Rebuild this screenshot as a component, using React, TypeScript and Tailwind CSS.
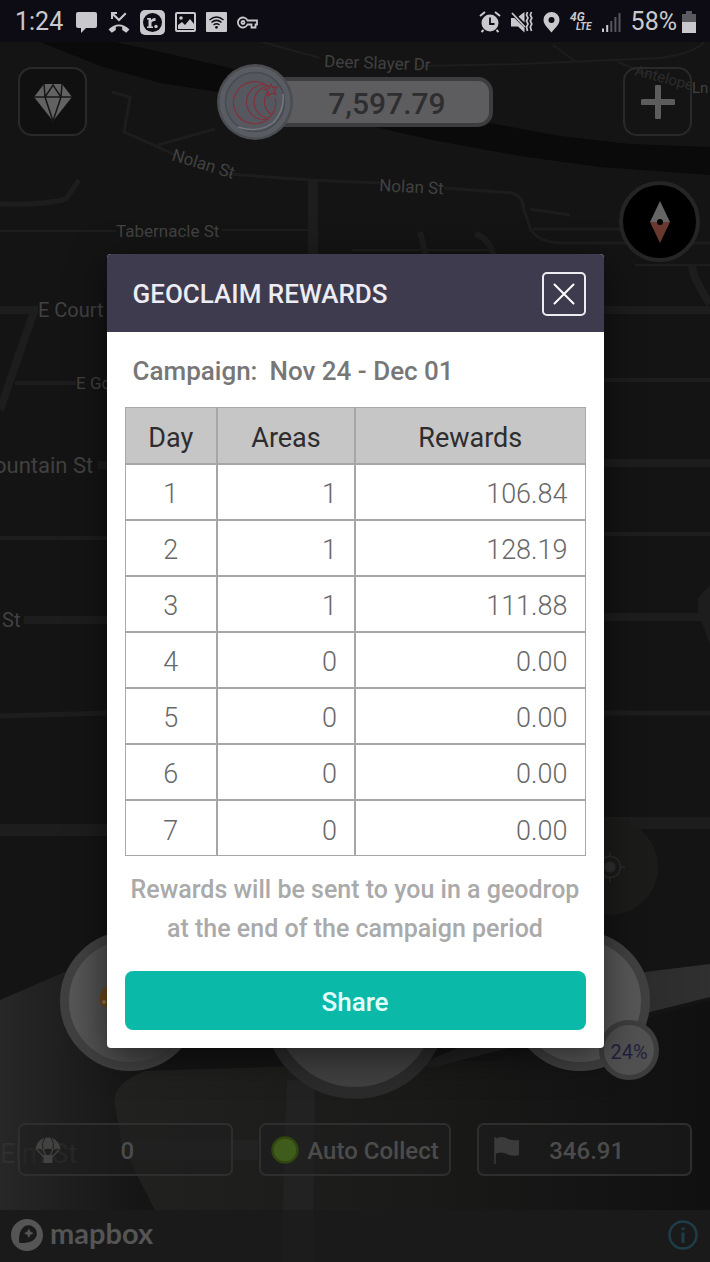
import type { ReactNode } from "react";
import { SiMapbox } from "react-icons/si";

const days = [
  { day: 1, areas: 1, rewards: "106.84" },
  { day: 2, areas: 1, rewards: "128.19" },
  { day: 3, areas: 1, rewards: "111.88" },
  { day: 4, areas: 0, rewards: "0.00" },
  { day: 5, areas: 0, rewards: "0.00" },
  { day: 6, areas: 0, rewards: "0.00" },
  { day: 7, areas: 0, rewards: "0.00" },
];

function StatusBar() {
  return (
    <header className="relative flex h-[42px] items-center justify-between bg-[#0d0c14] pt-[2px] pr-[14px] pl-[15px] text-[25px] text-[#c9c9cd]">
      <div className="flex items-center gap-[10px]">
        <span className="pr-[2px]">1:24</span>
        <svg width="23" height="23" viewBox="0 0 23 23" fill="currentColor">
          <path d="M3 1h17q2 0 2 2v12q0 2-2 2h-9l-5 5v-5H3q-2 0-2-2V3q0-2 2-2z" />
        </svg>
        <svg width="22" height="23" viewBox="0 0 22 23" fill="currentColor">
          <path d="M3 1h6v2H6.400l4.600 4.600 6-6 1.500 1.500-7.500 7.500L5 4.800V8H3z" />
          <path d="M0.500 18.500Q11 8.500 21.500 18.500l-3.300 3.300-4-2.700v-3.300q-3.200-1-6.400 0v3.300l-4 2.700z" />
        </svg>
        <svg width="25" height="25" viewBox="0 0 25 25">
          <rect width="25" height="25" rx="5" fill="currentColor" />
          <circle cx="12.500" cy="12.500" r="9.500" fill="#0d0c14" />
          <path d="M7 8h4v2q2-2.500 4.500-2v3q-3-.5-4 1.500v4h1.500v1.500H7V16.500h1.500V9.500H7z" fill="currentColor" />
          <circle cx="16" cy="16.500" r="1.700" fill="currentColor" />
        </svg>
        <svg width="21" height="20" viewBox="0 0 21 20" fill="none">
          <rect x="1" y="1" width="19" height="18" rx="1" stroke="currentColor" strokeWidth="2" />
          <circle cx="6" cy="6" r="1.800" fill="currentColor" />
          <path d="M3 17v-4l4-3 3 3 5-6 4 5v5z" fill="currentColor" />
        </svg>
        <svg width="21" height="20" viewBox="0 0 21 20" fill="none">
          <rect width="21" height="20" rx="1" fill="currentColor" />
          <g stroke="#0d0c14" strokeWidth="1.500">
            <path d="M3.500 8q7-6 14 0M5.500 10.500q5-4.300 10 0M7.500 13q3-2.500 6 0" />
          </g>
          <circle cx="10.500" cy="15.300" r="1.400" fill="#0d0c14" />
        </svg>
        <svg width="21" height="13" viewBox="0 0 21 13" fill="none" stroke="currentColor" strokeWidth="1.800">
          <path d="M10.500 4.500H20v4h-1.500V11.500h-4V8.500h-4a5 5 0 1 1 0-4z" />
          <circle cx="6" cy="6.500" r="1.500" />
        </svg>
      </div>
      <div className="flex items-center gap-[10px]">
        <svg width="22" height="22" viewBox="0 0 22 22" fill="none">
          <circle cx="11" cy="12" r="8.500" fill="currentColor" />
          <path d="M1 5l5-4M21 5l-5-4M4.500 19l-2 2M17.500 19l2 2" stroke="currentColor" strokeWidth="2" />
          <path d="M11 6.500V13h4.500" stroke="#0d0c14" strokeWidth="1.800" />
        </svg>
        <svg width="22" height="22" viewBox="0 0 22 22" fill="none">
          <path d="M0 7h3.500l10 10v4.500L7 15.500H0zM7.500 5.500L13.500 1v10.500z" fill="currentColor" />
          <path d="M1 2l13 14" stroke="currentColor" strokeWidth="1.800" />
          <path d="M16.500 1l-1 3 1.500 3-1.500 3 1.500 3-1.500 3 1 4M20.500 1l-1.200 3 1.500 3-1.500 3 1.500 3-1.500 3 1.200 4" stroke="currentColor" strokeWidth="1.700" />
        </svg>
        <svg width="17" height="22" viewBox="0 0 17 22" fill="currentColor">
          <path fillRule="evenodd" d="M8.500 1a8 8 0 0 1 8 8c0 5-5.500 9-8 12.500C6 18 .5 14 .5 9a8 8 0 0 1 8-8zm0 5a3 3 0 1 0 0 6 3 3 0 0 0 0-6z" />
        </svg>
        <span className="flex flex-col text-[12px] leading-[10px] font-bold italic">
          <span>4G</span>
          <span className="pl-[6px] text-[10px]">LTE</span>
        </span>
        <svg width="19" height="21" viewBox="0 0 19 21" fill="currentColor">
          <path d="M0 16.500h2V20H0zM4.200 13h2v7h-2z" />
          <path d="M8.300 9h2v11h-2zM12.400 5h2v15h-2zM16.500 1h2v19h-2z" fill="#55555b" />
        </svg>
        <span className="flex items-center gap-[5px]">
          58%
          <svg width="14" height="22" viewBox="0 0 14 22">
            <path d="M0 3h4V0h6v3h4v9H0z" fill="#5a5a60" />
            <path d="M0 11h14v11H0z" fill="currentColor" />
          </svg>
        </span>
      </div>
    </header>
  );
}

function MapCanvas() {
  return (
    <svg
      className="absolute inset-0 h-full w-full"
      viewBox="0 0 710 1262"
      preserveAspectRatio="xMidYMid slice"
      aria-label="Map"
    >
      <defs>
        <linearGradient id="west" x1="0" x2="140" gradientUnits="userSpaceOnUse">
          <stop stopColor="#272727" />
          <stop offset="1" stopColor="#151515" />
        </linearGradient>
        <linearGradient id="park" x1="110" x2="710" gradientUnits="userSpaceOnUse">
          <stop stopColor="#212120" />
          <stop offset="0.500" stopColor="#1a1a19" />
          <stop offset="1" stopColor="#101010" />
        </linearGradient>
        <linearGradient id="lane" x1="420" x2="710" gradientUnits="userSpaceOnUse">
          <stop stopColor="#1e1e1e" />
          <stop offset="1" stopColor="#303030" />
        </linearGradient>
      </defs>
      <rect width="710" height="1262" fill="#141414" />
      <path d="M40 42L100 66L160 83L225 93L380 128L432 140L520 156L600 167L710 175V147L630 144L560 136L495 124L300 90L230 68L170 54L115 42z" fill="#0a0a0a" />
      <g fill="none" stroke="#1d1d1d" strokeWidth="3">
        <path d="M262 42L320 58M418 66L520 64L660 58Q695 53 704 42M553 45L577 63M618 62L650 75" strokeWidth="2" />
        <path d="M112 92L130 97L124 132L160 148M158 145L215 129" strokeWidth="3" />
        <path d="M134 136L175 155M228 174L310 180L380 183M444 188L512 193Q523 196 524 210L531 230Q540 243 562 243H710M530 209L570 215M533 229H620" strokeWidth="3" />
        <path d="M0 204Q45 205 66 199L79 180" strokeWidth="5" />
        <path d="M0 231H116M222 230H308M352 250H490M635 265H710" strokeWidth="2" />
        <path d="M313 180V260" strokeWidth="10" />
        <path d="M420 232L426 256M475 234Q489 238 494 256" strokeWidth="6" />
        <path d="M0 310H38M600 310H710M34 312L24 340L0 410M692 264Q691 275 710 304" strokeWidth="8" />
        <path d="M15 383H76M600 380H710M0 538H110M600 534H710" strokeWidth="4" />
        <path d="M98 465H110M600 463H710M24 620H110M600 617H704" strokeWidth="8" />
        <path d="M0 716L110 713M600 713H710" strokeWidth="5" />
        <path d="M0 830H110M600 823H710" strokeWidth="12" />
      </g>
      <path d="M710 585L698 598V612L710 645z" fill="#1d1d1d" />
      <path d="M0 1000L65 972L160 945V1210H0z" fill="url(#west)" />
      <path d="M145 1071Q110 1085 115 1105L120 1135L137 1175L155 1210H710V1000L500 1060z" fill="url(#park)" />
      <path d="M420 1064L500 1030L645 972L710 964V997L650 1012L430 1068z" fill="url(#lane)" />
      <path d="M287 1080H315L313 1262H281z" fill="#222" />
      <path d="M120 1140H258V1160H128z" fill="#222" />
      <g fill="#414141" fontFamily="Roboto, sans-serif" fontSize="17">
        <text x="324" y="67" transform="rotate(2 324 67)">Deer Slayer Dr</text>
        <text x="634" y="75" fontSize="15" fill="#2c2c2c" transform="rotate(15 634 75)">Antelope</text>
        <text x="692" y="93" fontSize="15">Ln</text>
        <text x="171" y="160" transform="rotate(17 171 160)">Nolan St</text>
        <text x="379" y="191" transform="rotate(3 379 191)">Nolan St</text>
        <text x="116" y="237">Tabernacle St</text>
        <text x="38" y="317" fontSize="20">E Court</text>
        <text x="76" y="389">E Go</text>
        <text x="-6" y="473" fontSize="22">ountain St</text>
        <text x="2" y="627" fontSize="20">St</text>
        <text x="0" y="1163" fontSize="27" fill="#2f2f2f">Elm St</text>
      </g>
    </svg>
  );
}

function Coin() {
  return (
    <svg className="relative z-10" width="76" height="76" viewBox="0 0 76 76" fill="none">
      <clipPath id="moon">
        <circle cx="37" cy="38" r="21.500" />
      </clipPath>
      <circle cx="38" cy="38" r="38" fill="#4b4d52" />
      <circle cx="38" cy="38" r="35.500" fill="#595c63" />
      <circle cx="38" cy="38" r="29.500" fill="#55585f" stroke="#484b52" strokeWidth="1.500" />
      <path d="M66 30Q68 45 57 58Q42 70 21 63" stroke="#74777d" strokeWidth="1.500" />
      <g stroke="#82313a" strokeWidth="1.200">
        <path d="M52 23.500A21 21 0 1 0 58 34" />
        <g clipPath="url(#moon)">
          <circle cx="47" cy="38" r="17.500" />
          <circle cx="53" cy="38" r="16" />
          <circle cx="62" cy="38" r="14.500" />
        </g>
        <path d="M54 20l1.500 3.500 4.500-.5-3 3.500 2 4-4-1.500-3.500 3v-4.500l-4-2 4.500-1z" fill="#55585f" />
      </g>
    </svg>
  );
}

function TopControls() {
  return (
    <div className="relative flex items-start justify-between px-[18px] pt-[22px]">
      <button aria-label="Gems" className="mt-[3px] flex size-[69px] items-center justify-center rounded-[14px] border-2 border-[#292929] bg-[#101010]">
        <svg width="40" height="40" viewBox="0 0 40 40">
          <path d="M11 2H29L39 15L20 39L1 15z" fill="#626262" />
          <path d="M0 15H40M11 2L12 15L20 39L28 15L29 2M12 15L20 3L28 15" fill="none" stroke="#171717" strokeWidth="1.500" />
        </svg>
      </button>
      <div className="flex items-center">
        <Coin />
        <div className="-ml-[12px] flex h-[50px] w-[212px] items-center justify-center rounded-r-[15px] border-4 border-[#3d3d3f] bg-[#5d5d5f] pt-[3px] text-[30px] font-medium text-[#2e2e31]">
          7,597.79
        </div>
      </div>
      <button aria-label="Add" className="mt-[3px] flex size-[69px] items-center justify-center rounded-[14px] border-2 border-[#292929]">
        <svg width="34" height="34" viewBox="0 0 34 34">
          <path d="M17 2V32M2 17H32" stroke="#5c5c5c" strokeWidth="6" strokeLinecap="round" />
        </svg>
      </button>
    </div>
  );
}

function MapActions() {
  return (
    <div className="relative mt-auto">
      <div className="mr-[52px] flex justify-end">
        <button aria-label="My location" className="flex size-[96px] items-center justify-center rounded-full bg-[#1b1b1a]">
          <svg width="30" height="30" viewBox="0 0 30 30" fill="none" stroke="#2c2c2c" strokeWidth="1.500">
            <circle cx="15" cy="15" r="10.500" />
            <circle cx="15" cy="15" r="5" fill="#303030" />
            <path d="M15 0V5M15 25V30M0 15H5M25 15H30" />
          </svg>
        </button>
      </div>
      <div className="flex h-[184px] items-end justify-between px-[60px]">
        <button aria-label="Collect" className="mb-[28px] flex size-[140px] items-center rounded-full border-[9px] border-[#404040] bg-linear-to-r from-[#565656] to-[#3f3f3f] pl-[29px]">
          <svg width="24" height="32" viewBox="0 0 24 32">
            <path d="M9 1Q22 2 22 12V22H8Q1 21 1 14Q2 6 9 1z" fill="#68461a" />
            <circle cx="6" cy="17" r="2" fill="#8a7758" />
          </svg>
        </button>
        <button aria-label="Claim" className="size-[184px] rounded-full border-[12px] border-[#2b2b2b] bg-[#404040]" />
        <button className="relative mb-[28px] size-[140px] rounded-full border-[9px] border-[#404040] bg-[#565656]">
          <span className="absolute -right-[18px] -bottom-[18px] flex size-[60px] items-center justify-center rounded-full border-[5px] border-[#3d3d3d] bg-[#515151] pt-[3px] text-[20px] text-[#231f3d]">
            24%
          </span>
        </button>
      </div>
    </div>
  );
}

function StatBox({ icon, children, wide }: { icon: ReactNode; children: ReactNode; wide?: boolean }) {
  return (
    <button
      className={
        wide
          ? "flex h-[53px] min-w-0 items-center justify-center gap-[8px] rounded-[7px] border-2 border-[#2e2e2e] bg-[#1d1d1d]/50 whitespace-nowrap"
          : "grid h-[53px] min-w-0 grid-cols-[26px_1fr_22px] items-center rounded-[7px] border-2 border-[#2e2e2e] bg-[#1d1d1d]/50 px-[15px]"
      }
    >
      {icon}
      <span className="pt-[2px]">{children}</span>
    </button>
  );
}

function Stats() {
  return (
    <div className="relative mt-[24px] grid grid-cols-[215fr_193fr_215fr] gap-[26px] px-[18px] text-[24px] font-medium text-[#4c4c4c]">
      <StatBox
        icon={
          <svg width="26" height="26" viewBox="0 0 26 26">
            <path d="M.5 13A12.500 12.500 0 0 1 25.500 13Q22 10.500 18 13Q13 10.500 8 13Q4 10.500 .5 13z" fill="#414341" />
            <path d="M2 13L9 20M24 13L17 20M8 12L11 19M18 12L15 19" stroke="#414341" strokeWidth="1.200" />
            <path d="M10 1Q6 6 8 12M16 1Q20 6 18 12" stroke="#1d1d1d" fill="none" />
            <rect x="8.500" y="18" width="9" height="8" fill="#414341" />
          </svg>
        }
      >
        0
      </StatBox>
      <StatBox
        wide
        icon={
          <svg className="shrink-0" width="28" height="28" viewBox="0 0 28 28">
            <circle cx="14" cy="14" r="12.500" fill="#405c1c" stroke="#31460f" strokeWidth="2.500" />
          </svg>
        }
      >
        Auto Collect
      </StatBox>
      <StatBox
        icon={
          <svg width="26" height="28" viewBox="0 0 26 28">
            <path d="M1 1V28" stroke="#3b3b3b" strokeWidth="1.500" />
            <path d="M1 3Q8-1 14 3Q20 5 25 4V19Q19 21 13 18Q7 15 1 18z" fill="#3b3b3b" />
          </svg>
        }
      >
        346.91
      </StatBox>
    </div>
  );
}

function RewardsDialog() {
  return (
    <section
      role="dialog"
      aria-labelledby="rewards-title"
      className="w-[70%] overflow-hidden rounded-[4px] bg-white shadow-[0_8px_36px_rgba(0,0,0,0.5)]"
    >
      <div className="flex h-[78px] items-center justify-between bg-[#3e3b4f] pt-[2px] pr-[18px] pl-[26px]">
        <h1 id="rewards-title" className="text-[26px] font-medium whitespace-nowrap text-[#ececf1]">
          GEOCLAIM REWARDS
        </h1>
        <button aria-label="Close" className="flex size-[44px] items-center justify-center rounded-[5px] border-2 border-[#ececf1]">
          <svg width="22" height="22" viewBox="0 0 22 22">
            <path d="M1.500 1.500L20.500 20.500M20.500 1.500L1.500 20.500" stroke="#fff" strokeWidth="2" strokeLinecap="round" />
          </svg>
        </button>
      </div>
      <div className="px-[18px] pb-[18px]">
        <h2 className="flex h-[75px] items-center gap-[12px] pt-[4px] pl-[8px] text-[26px] font-medium whitespace-nowrap text-[#777]">
          <span>Campaign:</span>
          <span>Nov 24 - Dec 01</span>
        </h2>
        <table className="w-full table-fixed border-collapse border border-[#aaa] text-[27px] text-[#686868]">
          <thead className="bg-[#c6c6c6] text-[#2d2d2d]">
            <tr className="h-[56px] border-b-2 border-[#a6a6a6]">
              <th scope="col" className="w-[20%] border-r-2 border-[#a6a6a6] pt-[5px] font-normal">Day</th>
              <th scope="col" className="w-[30%] border-r-2 border-[#a6a6a6] pt-[5px] font-normal">Areas</th>
              <th scope="col" className="pt-[5px] font-normal">Rewards</th>
            </tr>
          </thead>
          <tbody className="font-light">
            {days.map((row) => (
              <tr key={row.day} className="h-[56px] border-b-2 border-[#a6a6a6] last:border-b">
                <td className="border-r-2 border-[#a6a6a6] pt-[6px] text-center">{row.day}</td>
                <td className="border-r-2 border-[#a6a6a6] pt-[6px] pr-[17px] text-right">{row.areas}</td>
                <td className="pt-[6px] pr-[17px] text-right">{row.rewards}</td>
              </tr>
            ))}
          </tbody>
        </table>
        <p className="mt-[14px] mb-[23px] text-center text-[25px] leading-[39px] font-medium text-[#aaa]">
          Rewards will be sent to you in a geodrop at the end of the campaign period
        </p>
        <button className="h-[59px] w-full rounded-[8px] bg-[#0bb9a9] pt-[3px] text-[26px] font-medium text-[#e4fffb]">
          Share
        </button>
      </div>
    </section>
  );
}

export default function App() {
  return (
    <main className="relative flex min-h-screen flex-col overflow-hidden bg-[#141414] font-[Roboto,sans-serif]">
      <MapCanvas />
      <StatusBar />
      <TopControls />
      <div className="relative mt-[41px] mr-[10px] flex justify-end">
        <button aria-label="Compass" className="flex size-[81px] items-center justify-center rounded-full border-4 border-[#252525] bg-black">
          <svg width="20" height="44" viewBox="0 0 20 44">
            <path d="M10 1L20 22H0z" fill="#656565" />
            <path d="M0 22H20L10 43z" fill="#69382e" />
            <circle cx="10" cy="22" r="3" fill="#000" />
          </svg>
        </button>
      </div>
      <MapActions />
      <Stats />
      <footer className="relative mt-[34px] flex h-[52px] items-center justify-between bg-[#1c1c1c]/80 pr-[12px] pb-[3px] pl-[11px] text-[#555]">
        <a href="#mapbox" className="flex items-center gap-[7px] font-['Lato',sans-serif] text-[29px] leading-[30px] font-bold">
          <SiMapbox size={32} />
          <span className="pb-[4px]">mapbox</span>
        </a>
        <button aria-label="Map info">
          <svg width="30" height="30" viewBox="0 0 30 30" fill="none" stroke="#1e3d49">
            <circle cx="15" cy="15" r="13.500" strokeWidth="2.500" />
            <path d="M15 12.500V23M15 7.500V10" strokeWidth="3" />
          </svg>
        </button>
      </footer>
      <div className="absolute inset-x-0 top-[42px] bottom-0 flex items-center justify-center pb-[2px]">
        <RewardsDialog />
      </div>
    </main>
  );
}
